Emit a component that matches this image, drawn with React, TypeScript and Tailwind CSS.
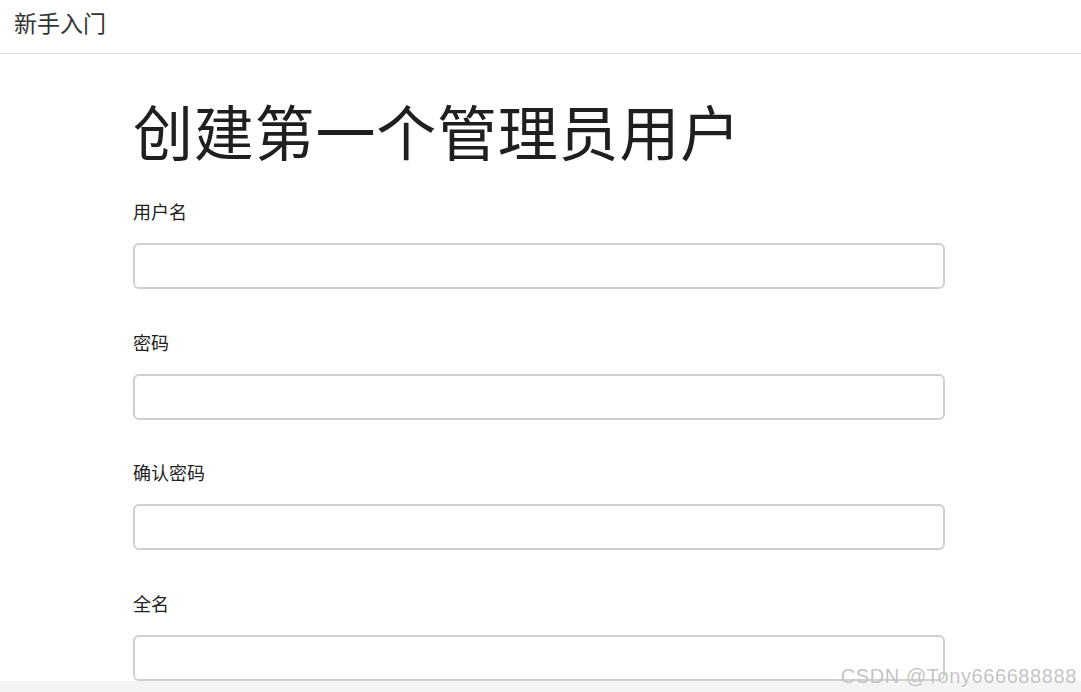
import React from "react";

const fields = ["用户名", "密码", "确认密码", "全名"];

export default function App() {
  return (
    <div
      className="relative h-[692px] w-full overflow-hidden bg-white text-[#212529]"
      style={{ fontFamily: '"Noto Sans CJK SC", "Noto Sans", sans-serif' }}
    >
      <header className="flex h-[54px] items-center border-b border-[#e3e3e3] pl-[14px]">
        <span className="pb-[9px] text-[23px] leading-none text-[#333]">新手入门</span>
      </header>
      <main className="pl-[133px]">
        <h1 className="mt-[40px] text-[60px] leading-[72px] font-normal tracking-[0.8px] text-[#1f1f1f]">
          创建第一个管理员用户
        </h1>
        <div className="mt-[32px] flex w-[812px] flex-col gap-[39.7px]">
          {fields.map((f) => (
            <div key={f} className="flex flex-col gap-[18px]">
              <label className="text-[18px] leading-[27px] text-[#222]">{f}</label>
              <input
                type="text"
                className="h-[46px] w-full rounded-[6px] border-2 border-[#d0d0d0] bg-white px-3 outline-none"
              />
            </div>
          ))}
        </div>
      </main>
      <div className="absolute right-0 bottom-0 left-0 h-[11px] bg-[#f4f4f4]" />
      <div
        className="absolute right-[4px] bottom-[6px] text-[20px] leading-none tracking-[0.6px] text-[#c4c4c4]"
        style={{ fontFamily: '"Liberation Sans", Arial, sans-serif' }}
      >
        CSDN @Tony666688888
      </div>
    </div>
  );
}
